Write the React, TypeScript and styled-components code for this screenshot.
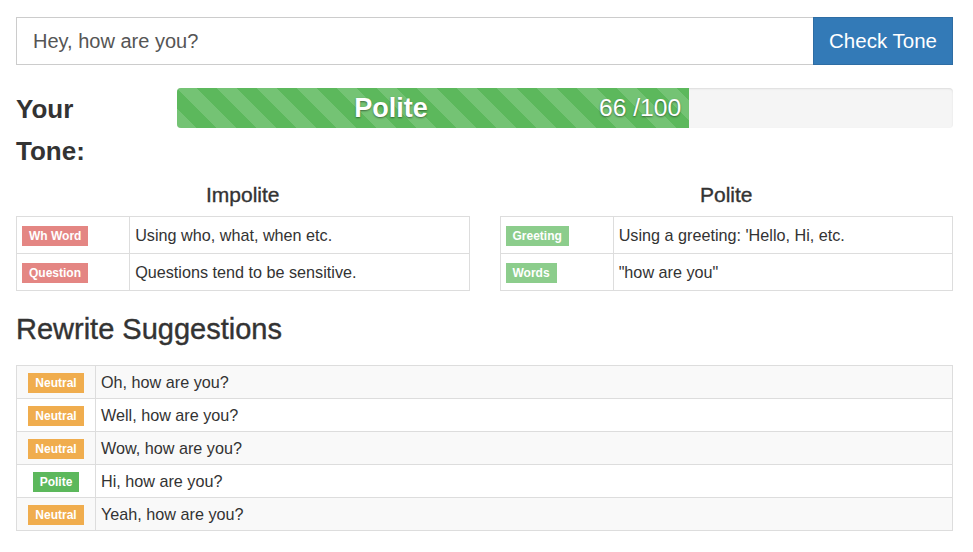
import styled, { createGlobalStyle } from 'styled-components';

const GlobalStyle = createGlobalStyle`
  body {
    margin: 0;
    background: #fff;
    font-family: "Liberation Sans", Arial, sans-serif;
    color: #333;
  }
  * { box-sizing: border-box; }
`;

const Page = styled.div`
  padding: 17px 20px 0 16px;
`;

const InputGroup = styled.div`
  display: flex;
  height: 48px;
`;

const ToneInput = styled.input`
  flex: 1;
  height: 48px;
  border: 1px solid #ccc;
  border-right: none;
  padding: 0 16px;
  font-family: "Liberation Sans", Arial, sans-serif;
  font-size: 20px;
  color: #555;
  outline: none;
`;

const CheckButton = styled.button`
  width: 140px;
  height: 48px;
  padding: 0;
  border: 1px solid #2e6da4;
  background: #337ab7;
  color: #fff;
  font-family: inherit;
  font-size: 20.5px;
  cursor: pointer;
`;

const ToneRow = styled.div`
  display: grid;
  grid-template-columns: 161px 1fr;
  margin-top: 23px;
`;

const ToneTitle = styled.h3`
  margin: 0;
  width: 131px;
  font-size: 26px;
  font-weight: bold;
  line-height: 42px;
`;

const Progress = styled.div`
  height: 40px;
  background: #f5f5f5;
  border-radius: 4px;
  box-shadow: inset 0 1px 2px rgba(0, 0, 0, 0.1);
  overflow: hidden;
`;

const ProgressBar = styled.div`
  height: 100%;
  display: flex;
  align-items: center;
  color: #fff;
  background-color: #5cb85c;
  background-image: linear-gradient(
    45deg,
    rgba(255, 255, 255, 0.15) 25%,
    transparent 25%,
    transparent 50%,
    rgba(255, 255, 255, 0.15) 50%,
    rgba(255, 255, 255, 0.15) 75%,
    transparent 75%,
    transparent
  );
  background-size: 40px 40px;
  text-shadow: 0 1px 2px rgba(0, 0, 0, 0.45);
`;

const ToneName = styled.span`
  flex: 1;
  text-align: center;
  padding-left: 6px;
  font-size: 27px;
  font-weight: bold;
`;

const Score = styled.span`
  padding-right: 8px;
  font-size: 24.6px;
`;

const Columns = styled.div`
  display: grid;
  grid-template-columns: 1fr 1fr;
  column-gap: 30px;
  margin-top: 11px;
`;

const ColumnTitle = styled.h4`
  margin: 0 0 9px;
  text-align: center;
  font-size: 21px;
  font-weight: normal;
  line-height: 24px;
  -webkit-text-stroke: 0.35px #333;
`;

const Table = styled.table`
  width: 100%;
  border-collapse: collapse;
  border: 1px solid #ddd;
  font-size: 16.2px;
`;

const Row = styled.tr<{ $striped?: boolean }>`
  background: ${p => (p.$striped ? '#f9f9f9' : '#fff')};
`;

const Cell = styled.td<{ $w?: string; $center?: boolean; $condensed?: boolean }>`
  border: 1px solid #ddd;
  height: ${p => (p.$condensed ? '33px' : '37px')};
  padding: 0 5px;
  width: ${p => p.$w || 'auto'};
  text-align: ${p => (p.$center ? 'center' : 'left')};
  vertical-align: middle;
  line-height: 20px;
`;

const Label = styled.span<{ $color: string; $faded?: boolean }>`
  display: inline-block;
  padding: 4px 7px;
  font-size: 12px;
  font-weight: bold;
  line-height: 12px;
  color: #fff;
  background: ${p => p.$color};
  opacity: ${p => (p.$faded ? 0.7 : 1)};
  vertical-align: middle;
`;

const SectionTitle = styled.h2`
  margin: 21px 0 19px;
  font-size: 29px;
  font-weight: normal;
  line-height: 34px;
  -webkit-text-stroke: 0.4px #333;
`;

const RED = '#d9534f';
const GREEN = '#5cb85c';
const ORANGE = '#f0ad4e';

const impolite = [
  { tag: 'Wh Word', text: 'Using who, what, when etc.' },
  { tag: 'Question', text: 'Questions tend to be sensitive.' },
];

const polite = [
  { tag: 'Greeting', text: "Using a greeting: 'Hello, Hi, etc." },
  { tag: 'Words', text: '"how are you"' },
];

const suggestions = [
  { tone: 'Neutral', text: 'Oh, how are you?' },
  { tone: 'Neutral', text: 'Well, how are you?' },
  { tone: 'Neutral', text: 'Wow, how are you?' },
  { tone: 'Polite', text: 'Hi, how are you?' },
  { tone: 'Neutral', text: 'Yeah, how are you?' },
];

function ReasonTable({ rows, color }: { rows: { tag: string; text: string }[]; color: string }) {
  return (
    <Table>
      <tbody>
        {rows.map(r => (
          <Row key={r.tag}>
            <Cell $w="25%">
              <Label $color={color} $faded>{r.tag}</Label>
            </Cell>
            <Cell>{r.text}</Cell>
          </Row>
        ))}
      </tbody>
    </Table>
  );
}

export default function App() {
  const score = 66;
  return (
    <>
      <GlobalStyle />
      <Page>
        <InputGroup>
          <ToneInput defaultValue="Hey, how are you?" />
          <CheckButton>Check Tone</CheckButton>
        </InputGroup>

        <ToneRow>
          <ToneTitle>Your Tone:</ToneTitle>
          <Progress>
            <ProgressBar style={{ width: `${score}%` }}>
              <ToneName>Polite</ToneName>
              <Score>{score} /100</Score>
            </ProgressBar>
          </Progress>
        </ToneRow>

        <Columns>
          <div>
            <ColumnTitle>Impolite</ColumnTitle>
            <ReasonTable rows={impolite} color={RED} />
          </div>
          <div>
            <ColumnTitle>Polite</ColumnTitle>
            <ReasonTable rows={polite} color={GREEN} />
          </div>
        </Columns>

        <SectionTitle>Rewrite Suggestions</SectionTitle>
        <Table>
          <tbody>
            {suggestions.map((s, i) => (
              <Row key={s.text} $striped={i % 2 === 0}>
                <Cell $w="79px" $center $condensed>
                  <Label $color={s.tone === 'Polite' ? GREEN : ORANGE}>{s.tone}</Label>
                </Cell>
                <Cell $condensed>{s.text}</Cell>
              </Row>
            ))}
          </tbody>
        </Table>
      </Page>
    </>
  );
}
